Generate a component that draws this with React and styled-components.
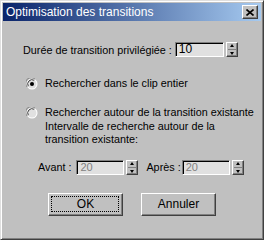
import React from 'react';
import styled, { createGlobalStyle } from 'styled-components';

const Global = createGlobalStyle`
  html, body { margin: 0; padding: 0; background: #c0c0c0; }
  body { font-family: "Liberation Sans", Arial, sans-serif; font-size: 10.8px; color: #000; }
`;

const Window = styled.div`
  width: 264px;
  height: 240px;
  box-sizing: border-box;
  background: #c0c0c0;
  border: 1px solid;
  border-color: #dfdfdf #404040 #404040 #dfdfdf;
  box-shadow: inset 1px 1px 0 #fff, inset -1px -1px 0 #808080;
  padding: 2px;
  display: flex;
  flex-direction: column;
`;

const TitleBar = styled.div`
  height: 18px;
  display: flex;
  align-items: center;
  justify-content: space-between;
  padding: 0 3px 0 3px;
  background: linear-gradient(to right, #0a246a, #a6caf0);
  color: #fff;
  font-size: 12px;
`;

const CloseButton = styled.div`
  width: 16px;
  height: 14px;
  box-sizing: border-box;
  background: #c0c0c0;
  border: 1px solid;
  border-color: #fff #404040 #404040 #fff;
  box-shadow: inset -1px -1px 0 #808080;
  display: flex;
  align-items: center;
  justify-content: center;
`;

const Body = styled.div`
  display: flex;
  flex-direction: column;
  padding: 21px 0 0 20px;
`;

const Row = styled.div`
  display: flex;
  align-items: center;
  height: 15px;
`;

const Label = styled.span`
  white-space: nowrap;
  margin-left: ${p => p.$ml || 0}px;
`;

const Field = styled.div`
  width: ${p => p.$w}px;
  height: 15px;
  box-sizing: border-box;
  margin-left: ${p => p.$ml || 0}px;
  background: #e0e0e0;
  border: 1px solid;
  border-color: #808080 #fff #fff #808080;
  box-shadow: inset 1px 1px 0 #000;
  color: ${p => (p.$disabled ? '#808080' : '#000')};
  font-size: ${p => (p.$disabled ? 11 : 12)}px;
  line-height: 13px;
  padding-left: 3px;
`;

const Spinner = styled.div`
  width: 12px;
  height: 15px;
  margin-left: ${p => p.$ml || 2}px;
  box-sizing: border-box;
  background: #c0c0c0;
  border: 1px solid;
  border-color: #fff #404040 #404040 #fff;
  box-shadow: inset -1px -1px 0 #808080;
  display: flex;
  flex-direction: column;
  align-items: center;
  justify-content: space-around;
`;

const Arrow = styled.div`
  width: 0;
  height: 0;
  border-left: 2.5px solid transparent;
  border-right: 2.5px solid transparent;
  ${p => (p.$up ? 'border-bottom: 3px solid #000;' : 'border-top: 3px solid #000;')}
`;

const SpinSep = styled.div`
  width: 8px;
  height: 1px;
  background: #808080;
`;

const RadioRow = styled.div`
  display: flex;
  align-items: flex-start;
  margin-top: ${p => p.$mt}px;
  padding-left: 3px;
`;

const RadioText = styled.div`
  margin-left: 7px;
  line-height: 13.4px;
  margin-top: -1px;
`;

const IntervalRow = styled(Row)`
  margin-top: 13px;
  padding-left: 15px;
`;

const Buttons = styled.div`
  display: flex;
  justify-content: center;
  gap: 18px;
  margin-top: 18px;
  margin-left: -20px;
`;

const Button = styled.div`
  width: 75px;
  height: 23px;
  box-sizing: border-box;
  background: #c0c0c0;
  border: 1px solid;
  border-color: #fff #404040 #404040 #fff;
  box-shadow: inset -1px -1px 0 #808080;
  display: flex;
  align-items: center;
  justify-content: center;
  position: relative;
  font-size: 12px;
  ${p => p.$focus && `
    &::after {
      content: '';
      position: absolute;
      inset: 2px 3px 3px 2px;
      border: 1px dotted #000;
    }
  `}
`;

function Radio({ checked }) {
  return (
    <svg width="12" height="12" viewBox="0 0 12 12">
      <circle cx="6" cy="6" r="5.5" fill="#fff" />
      <path d="M1.2 9 A5.5 5.5 0 0 1 9 1.2" stroke="#808080" strokeWidth="1" fill="none" />
      <circle cx="6" cy="6" r="4.5" fill="#e0e0e0" />
      <path d="M2.3 8.2 A4.3 4.3 0 0 1 8.2 2.3" stroke="#404040" strokeWidth="1" fill="none" />
      {checked && <circle cx="6" cy="6" r="2" fill="#000" />}
    </svg>
  );
}

function Spin({ ml }) {
  return (
    <Spinner $ml={ml}>
      <Arrow $up />
      <SpinSep />
      <Arrow />
    </Spinner>
  );
}

export default function App() {
  return (
    <>
      <Global />
      <Window>
        <TitleBar>
          <span>Optimisation des transitions</span>
          <CloseButton>
            <svg width="8" height="7" viewBox="0 0 8 7">
              <path d="M0.5 0.5 L7.5 6.5 M7.5 0.5 L0.5 6.5" stroke="#000" strokeWidth="1.6" />
            </svg>
          </CloseButton>
        </TitleBar>
        <Body>
          <Row>
            <Label>Durée de transition privilégiée :</Label>
            <Field $w={49} $ml={3}>10</Field>
            <Spin ml={2} />
          </Row>
          <RadioRow $mt={21}>
            <Radio checked />
            <RadioText>Rechercher dans le clip entier</RadioText>
          </RadioRow>
          <RadioRow $mt={17}>
            <Radio />
            <RadioText>
              Rechercher autour de la transition existante
              <br />
              Intervalle de recherche autour de la
              <br />
              transition existante:
            </RadioText>
          </RadioRow>
          <IntervalRow>
            <Label>Avant :</Label>
            <Field $w={48} $ml={5} $disabled>20</Field>
            <Spin ml={2} />
            <Label $ml={8}>Après :</Label>
            <Field $w={48} $ml={1} $disabled>20</Field>
            <Spin ml={2} />
          </IntervalRow>
          <Buttons>
            <Button $focus>OK</Button>
            <Button>Annuler</Button>
          </Buttons>
        </Body>
      </Window>
    </>
  );
}
